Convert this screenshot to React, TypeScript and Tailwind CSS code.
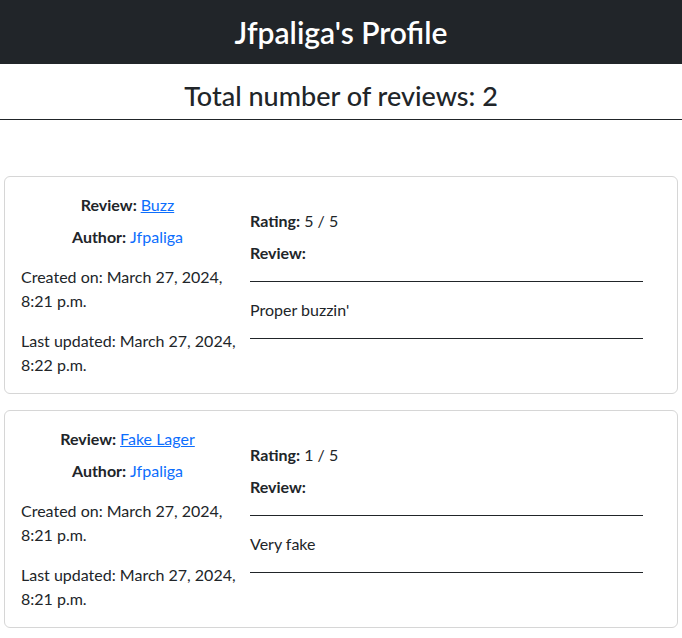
import React from 'react'

type Review = {
  title: string
  author: string
  created: string
  updated: string
  rating: number
  body: string
}

const reviews: Review[] = [
  {
    title: 'Buzz',
    author: 'Jfpaliga',
    created: '8:21 p.m.',
    updated: '8:22 p.m.',
    rating: 5,
    body: "Proper buzzin'"
  },
  {
    title: 'Fake Lager',
    author: 'Jfpaliga',
    created: '8:21 p.m.',
    updated: '8:21 p.m.',
    rating: 1,
    body: 'Very fake'
  }
]

function ReviewCard({ review }: { review: Review }) {
  return (
    <div className="mb-4 rounded-md border border-[#d6d6d6] p-4">
      <div className="flex">
        <div className="w-[213px] shrink-0">
          <p className="mb-2 text-center leading-6">
            <span className="font-bold">Review: </span>
            <a href="#" className="text-[#0d6efd] underline">
              {review.title}
            </a>
          </p>
          <p className="mb-4 text-center leading-6">
            <span className="font-bold">Author: </span>
            <a href="#" className="text-[#0d6efd]">
              {review.author}
            </a>
          </p>
          <p className="mb-4 whitespace-nowrap leading-6">
            Created on: March 27, 2024,
            <br />
            {review.created}
          </p>
          <p className="whitespace-nowrap leading-6">
            Last updated: March 27, 2024,
            <br />
            {review.updated}
          </p>
        </div>
        <div className="ml-4 w-[393px] pt-4">
          <p className="mb-2 leading-6">
            <span className="font-bold">Rating:</span> {review.rating} / 5
          </p>
          <p className="mb-4 font-bold leading-6">Review:</p>
          <hr className="border-t border-[#212529]" />
          <p className="my-4 leading-6">{review.body}</p>
          <hr className="border-t border-[#212529]" />
        </div>
      </div>
    </div>
  )
}

export default function App() {
  return (
    <div className="min-h-screen bg-white font-['Lato',sans-serif] text-base text-[#212529]">
      <header className="flex h-16 items-center justify-center bg-[#212529]">
        <h1 className="text-[30px] font-semibold text-white">Jfpaliga's Profile</h1>
      </header>
      <h2 className="pt-[15px] pb-[6px] text-center text-[27px] font-medium leading-[34px]">
        Total number of reviews: 2
      </h2>
      <hr className="border-t border-[#212529]" />
      <main className="px-1 pt-14">
        {reviews.map((review) => (
          <ReviewCard key={review.title} review={review} />
        ))}
      </main>
    </div>
  )
}
